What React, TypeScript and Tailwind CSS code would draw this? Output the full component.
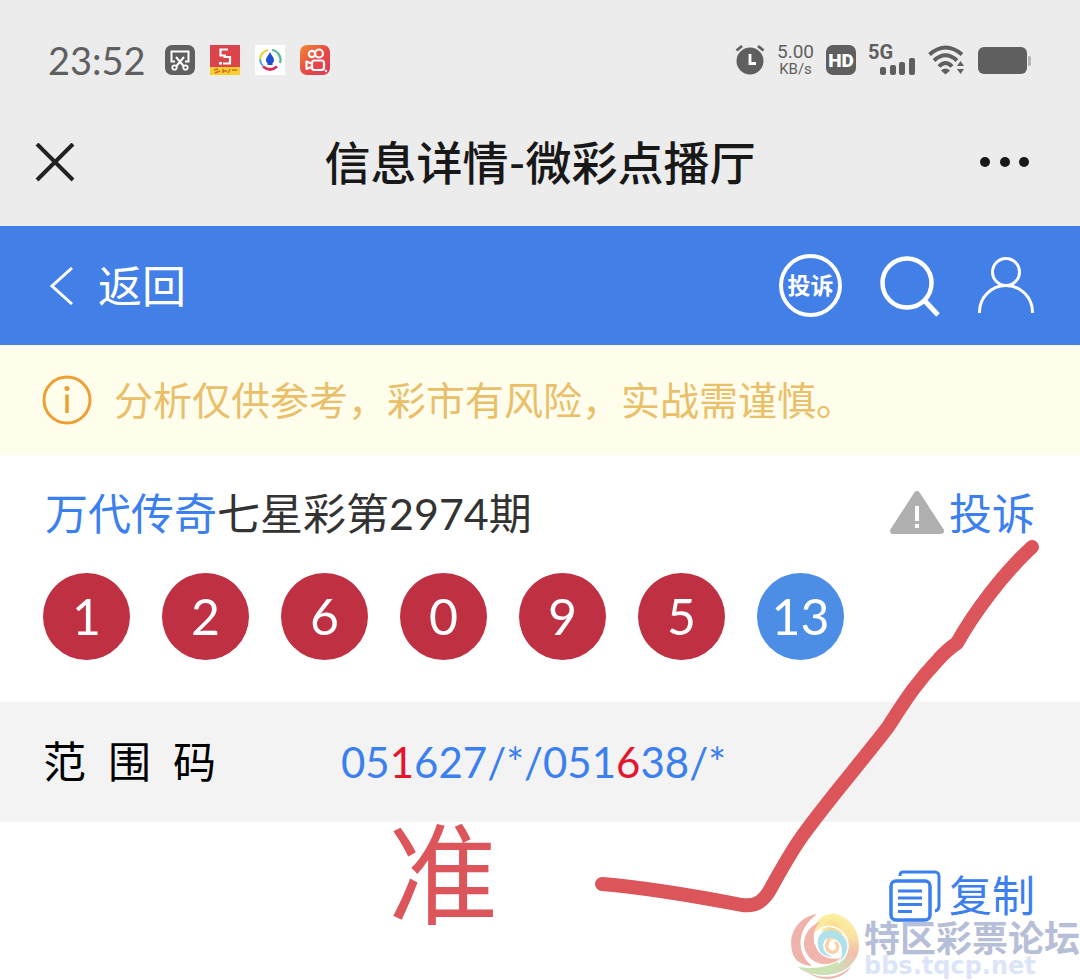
import { Fragment } from "react";

interface Ball {
  value: string;
  special?: boolean;
}

const balls: Ball[] = [
  { value: "1" },
  { value: "2" },
  { value: "6" },
  { value: "0" },
  { value: "9" },
  { value: "5" },
  { value: "13", special: true },
];

// hit marks the digits that came up in the draw
const rangeCode = [
  { text: "05" },
  { text: "1", hit: true },
  { text: "627/*/051" },
  { text: "6", hit: true },
  { text: "38/*" },
];

const ScreenshotIcon = () => (
  <svg width="30" height="30" viewBox="0 0 30 30" fill="none">
    <rect width="30" height="30" rx="7" fill="#5f5f5f" />
    <path d="M10 16.500H6.500V6.500H23.500V16.500H20" stroke="#fff" strokeWidth="2" />
    <path d="M11 12L19 21.500M19 12L11 21.500" stroke="#fff" strokeWidth="2" />
    <circle cx="9.500" cy="22.500" r="2.200" stroke="#fff" strokeWidth="1.800" />
    <circle cx="20.500" cy="22.500" r="2.200" stroke="#fff" strokeWidth="1.800" />
  </svg>
);

const LotteryAppIcon = () => (
  <svg width="30" height="30" viewBox="0 0 30 30" fill="none">
    <rect width="30" height="23" fill="#dc444c" />
    <rect y="22" width="30" height="8" fill="#f5cf2c" />
    <path d="M18 4.500H10.500V10.500H16M13.500 12H20V18.500H13" stroke="#fff" strokeWidth="2.200" />
    <rect x="9" y="17" width="3" height="2.500" fill="#fff" />
    <path d="M4 25L8 24M5 28L10 26M13 24V28M13 26H17M20 24L18 28M22 25H27" stroke="#d8682f" strokeWidth="1.500" />
  </svg>
);

const DropAppIcon = () => (
  <svg width="30" height="30" viewBox="0 0 30 30" fill="none">
    <rect width="30" height="30" fill="#fff" />
    <path d="M13 5A10 10 0 0 0 5 15" stroke="#e8cf3c" strokeWidth="2.200" />
    <path d="M5 14.500A10 10 0 0 0 8 21" stroke="#57a9e0" strokeWidth="2.200" />
    <path d="M17 5A10 10 0 0 1 25 18" stroke="#55bd8d" strokeWidth="2.200" />
    <path d="M8 21.500Q15 27.500 22 21.500" stroke="#d92b57" strokeWidth="2.800" />
    <path d="M15 7C16 10 19 12 19 15.500C19 17 18 18 17.500 18V20H12.500V18C12 18 11 17 11 15.500C11 12 14 10 15 7Z" fill="#1f4fcf" />
  </svg>
);

const VideoAppIcon = () => (
  <svg width="30" height="30" viewBox="0 0 30 30" fill="none">
    <defs>
      <linearGradient id="video" x1="0" y1="0" x2="1" y2="1">
        <stop offset="0" stopColor="#f38a35" />
        <stop offset=".5" stopColor="#e84b42" />
        <stop offset="1" stopColor="#dc3859" />
      </linearGradient>
    </defs>
    <rect width="30" height="30" rx="7" fill="url(#video)" />
    <g stroke="#fff" strokeWidth="2.200">
      <circle cx="12" cy="9" r="3.200" />
      <circle cx="19" cy="8.500" r="4" />
      <rect x="12" y="15.500" width="12" height="9.500" rx="2.500" />
      <path d="M11.500 18.500L6.500 16.500V24L11.500 22" strokeLinejoin="round" />
    </g>
    <circle cx="26" cy="26" r="1.200" fill="#fff" />
  </svg>
);

const AlarmIcon = () => (
  <svg width="30" height="34" viewBox="0 0 30 34" fill="none">
    <circle cx="15" cy="18" r="13.500" fill="#5f5f5f" />
    <path d="M1.500 7.500L7 3M28.500 7.500L23 3" stroke="#5f5f5f" strokeWidth="2.800" />
    <path d="M15 11V20.500H21" stroke="#fff" strokeWidth="2.800" />
  </svg>
);

const HdIcon = () => (
  <svg width="30" height="30" viewBox="0 0 30 30">
    <rect width="30" height="30" rx="7" fill="#5f5f5f" />
    <text x="15" y="22" textAnchor="middle" fontSize="19" fontWeight="900" fill="#fff" fontFamily="Roboto, sans-serif">
      HD
    </text>
  </svg>
);

const SignalIcon = () => (
  <svg width="48" height="40" viewBox="0 -5 48 40" fill="#5f5f5f">
    <text x="0" y="14" fontSize="20" fontWeight="700" fontFamily="Roboto, sans-serif">
      5G
    </text>
    <rect x="12" y="22" width="6" height="8" rx="2" />
    <rect x="22" y="20" width="6" height="10" rx="2" />
    <rect x="31" y="17" width="6" height="13" rx="2" />
    <rect x="41" y="13" width="6" height="17" rx="2" />
  </svg>
);

const WifiIcon = () => (
  <svg width="38" height="30" viewBox="0 0 38 30" fill="none">
    <g stroke="#5f5f5f" strokeWidth="4">
      <path d="M1.500 9.500Q17.500 -4.500 34 9.500" />
      <path d="M6 15.500Q17.500 5 29 15.500" />
      <path d="M11 21.500Q17.500 14.500 24 21.500" />
    </g>
    <path d="M13 25.500Q17.500 21.500 22 25.500L17.500 29.500Z" fill="#5f5f5f" />
    <path d="M29 21L32.500 16L36 21ZM29 24L32.500 29L36 24Z" fill="#5f5f5f" />
  </svg>
);

const BatteryIcon = () => (
  <svg width="54" height="27" viewBox="0 0 54 27">
    <rect width="49" height="27" rx="6" fill="#5f5f5f" />
    <path d="M50 9H51A2 2 0 0 1 53 11V17A2 2 0 0 1 51 19H50Z" fill="#b5b5b5" />
  </svg>
);

const StatusBar = () => (
  <div className="flex items-center justify-between px-12 pt-10 pb-5 text-[#5f5f5f]">
    <div className="flex items-center gap-[15px]">
      <time className="mr-1 text-[38px] leading-10">23:52</time>
      <ScreenshotIcon />
      <LotteryAppIcon />
      <DropAppIcon />
      <VideoAppIcon />
    </div>
    <div className="flex items-center gap-3">
      <AlarmIcon />
      <div className="text-center font-[Roboto,sans-serif]">
        <div className="text-[19px] leading-[18px]">5.00</div>
        <div className="text-[15px] leading-4">KB/s</div>
      </div>
      <HdIcon />
      <SignalIcon />
      <WifiIcon />
      <BatteryIcon />
    </div>
  </div>
);

const TitleBar = () => (
  <div className="grid grid-cols-[1fr_auto_1fr] items-center px-[35px] py-10 text-[#181818]">
    <button aria-label="关闭" className="justify-self-start">
      <svg width="40" height="40" viewBox="0 0 40 40" fill="none" stroke="#222" strokeWidth="4">
        <path d="M2 1L38 37M38 1L2 37" />
      </svg>
    </button>
    <h1 className="text-[46px] leading-[46px] font-medium">信息详情-微彩点播厅</h1>
    <button aria-label="更多" className="justify-self-end">
      <svg width="66" height="12" viewBox="0 0 66 12" fill="#181818">
        <circle cx="6" cy="5" r="5" />
        <circle cx="26" cy="5" r="5" />
        <circle cx="45" cy="5" r="5" />
      </svg>
    </button>
  </div>
);

const NavBar = () => (
  <nav className="flex items-center justify-between bg-[#427fe7] py-7 pr-[46px] pl-[50px] text-white">
    <a href="#back" className="flex items-center gap-6">
      <svg width="24" height="38" viewBox="0 0 24 38" fill="none" stroke="#fff" strokeWidth="3">
        <path d="M22 1L2 19L22 37" />
      </svg>
      <span className="text-[44px] leading-[60px]">返回</span>
    </a>
    <div className="flex items-center gap-[38px]">
      <button className="flex size-[63px] items-center justify-center rounded-full border-4 border-white text-[23px] font-bold">
        投诉
      </button>
      <button aria-label="搜索">
        <svg width="60" height="62" viewBox="0 0 60 62" fill="none" stroke="#fff" strokeWidth="4.500">
          <circle cx="27" cy="28" r="24.500" />
          <path d="M44 45L58 60" strokeWidth="5" />
        </svg>
      </button>
      <button aria-label="我的">
        <svg width="56" height="58" viewBox="0 0 56 58" fill="none" stroke="#fff" strokeWidth="3">
          <circle cx="28" cy="15" r="13.500" />
          <path d="M1.500 56V55A26.500 26.500 0 0 1 54.500 55V56" />
        </svg>
      </button>
    </div>
  </nav>
);

const Notice = () => (
  <div className="flex items-center gap-[22px] bg-[#fffdec] px-[42px] py-[30px]">
    <svg width="50" height="50" viewBox="0 0 50 50" fill="none">
      <circle cx="25" cy="25" r="23" stroke="#ec9f33" strokeWidth="3" />
      <circle cx="25" cy="13.500" r="2.500" fill="#ec9f33" />
      <path d="M25 19.500V38" stroke="#ec9f33" strokeWidth="3.500" />
    </svg>
    <p className="text-[39px] leading-[50px] text-[#e9c069]">
      分析仅供参考，彩市有风险，实战需谨慎。
    </p>
  </div>
);

const Prediction = () => (
  <section className="pt-[29px] pb-[42px]">
    <div className="flex items-center justify-between px-[45px] text-[43px] leading-[60px]">
      <h2 className="text-[#333]">
        <a href="#author" className="text-[#3b80ee]">
          万代传奇
        </a>
        七星彩第2974期
      </h2>
      <button className="flex items-center gap-1 text-[#3b80ee]">
        <svg width="56" height="46" viewBox="0 0 56 46">
          <path d="M28 3L52 40H4Z" fill="#b0b0b0" stroke="#b0b0b0" strokeWidth="6" strokeLinejoin="round" />
          <path d="M28 15V30M28 33V37" stroke="#fff" strokeWidth="4" />
        </svg>
        投诉
      </button>
    </div>
    <ul className="mt-[29px] flex gap-8 px-[43px]">
      {balls.map((ball) => (
        <li
          key={ball.value}
          className={`flex size-[87px] items-center justify-center rounded-full text-[50px] text-white ${
            ball.special ? "bg-[#4c8de6]" : "bg-[#bf3043]"
          }`}
        >
          {ball.value}
        </li>
      ))}
    </ul>
  </section>
);

const RangeCode = () => (
  <dl className="flex items-center bg-[#f3f3f3] px-[43px] py-[30px] leading-[60px]">
    <dt className="flex w-[298px] gap-[22px] text-[43px] text-black">
      <span>范</span>
      <span>围</span>
      <span>码</span>
    </dt>
    <dd className="text-[42px] text-[#3b80ee]">
      {rangeCode.map((part, i) => (
        <Fragment key={i}>
          {part.hit ? <span className="text-[#e6142d]">{part.text}</span> : part.text}
        </Fragment>
      ))}
    </dd>
  </dl>
);

const CopyRow = () => (
  <div className="flex justify-end px-[45px] pt-11 text-[43px] leading-[60px]">
    <button className="flex items-center gap-2 text-[#3b80ee]">
      <svg width="52" height="52" viewBox="0 0 52 52" fill="none" stroke="#3b80ee" strokeWidth="3">
        <path d="M11 6V5A3 3 0 0 1 14 2H46A4 4 0 0 1 50 6V36A5 5 0 0 1 46 41" />
        <rect x="2" y="11" width="39" height="39" rx="5" strokeWidth="3.500" />
        <path d="M9 21H33M9 28H33M9 34.500H33M9 41.500H23" strokeWidth="2.800" />
      </svg>
      复制
    </button>
  </div>
);

// hand-drawn tick with the "准" stamp next to it
const Marks = () => (
  <div className="pointer-events-none absolute top-0 left-0 text-[#dc555b]">
    <span className="absolute top-[818px] left-[388px] text-[110px] leading-[110px]">准</span>
    <svg width="1080" height="980" viewBox="0 0 1080 980" className="max-w-none" fill="none">
      <path
        d="M602 884C650 888 690 895 742 905C756 907 764 901 771 888C780 872 790 853 803 835C829 799 862 761 888 727C903 704 915 684 938 660C944 653 950 648 957 643C975 611 1003 574 1032 547"
        stroke="#dc555b"
        strokeWidth="14"
        strokeLinecap="round"
        strokeLinejoin="round"
      />
    </svg>
  </div>
);

const Watermark = () => (
  <div className="pointer-events-none absolute right-0 bottom-0 flex items-end gap-1">
    <svg width="70" height="70" viewBox="0 0 70 70" fill="none">
      <defs>
        <linearGradient id="sweep" x1="0" y1="0" x2="0" y2="1">
          <stop offset="0" stopColor="#fbf0a0" />
          <stop offset=".35" stopColor="#fae3a0" />
          <stop offset=".65" stopColor="#f3bfae" />
          <stop offset="1" stopColor="#c9e3bb" />
        </linearGradient>
        <radialGradient id="core">
          <stop offset="0" stopColor="#fbd28e" />
          <stop offset="1" stopColor="#fbeb9d" />
        </radialGradient>
      </defs>
      <circle cx="36" cy="36" r="33" fill="#fff" fillOpacity=".8" />
      <path d="M27 4C8 7 -2 24 2 41C4 50 10 55 22 56C4 41 9 17 27 4Z" fill="#efb3ac" />
      <path d="M24 22C25 8 36 2 46 4C61 8 70 22 69 38C67 56 50 66 32 65C22 65 12 61 8 57C30 61 52 56 57 41C60 25 47 16 35 18Z" fill="url(#sweep)" />
      <path d="M8 57C28 60 43 56 57 46C50 62 28 68 8 57Z" fill="#cbe3b0" />
      <path d="M16 61C28 69 48 70 61 56C56 67 34 76 16 61Z" fill="#efb5a8" />
      <path d="M30 12C16 17 10 32 17 44C23 55 40 58 51 48C37 51 27 44 25 34C22 24 25 17 30 12Z" fill="#f2b5ad" />
      <circle cx="43" cy="19" r="11" fill="url(#core)" />
      <path d="M28 36C25 20 43 15 53 26C61 35 59 47 49 54C55 42 52 30 42 28C34 27 32 33 34 40C36 44 40 46 43 47C35 47 29 43 28 36Z" fill="#b0e0ea" />
      <path d="M39 30C34 37 38 43 44 42C48 41 49 36 46 33" stroke="#f7d3a8" strokeWidth="3.500" strokeLinecap="round" />
      <path d="M28 6C8 18 6 41 22 53M25 34C22 18 38 12 50 20C62 29 60 46 48 53" stroke="#fff" strokeWidth="1.500" />
    </svg>
    <div className="font-bold">
      <div className="text-[36px] leading-7 text-[#b7bfd8]">特区彩票论坛</div>
      <div className="font-['DejaVu_Sans',sans-serif] text-[24px] leading-7 text-[#dce5f8]">bbs.tqcp.net</div>
    </div>
  </div>
);

const App = () => {
  return (
    <div className="relative min-h-screen overflow-hidden bg-white font-[Lato,'Noto_Sans_CJK_SC',sans-serif]">
      <header className="bg-[#ececec]">
        <StatusBar />
        <TitleBar />
      </header>
      <NavBar />
      <Notice />
      <main>
        <Prediction />
        <RangeCode />
        <CopyRow />
      </main>
      <Marks />
      <Watermark />
    </div>
  );
};

export default App;
